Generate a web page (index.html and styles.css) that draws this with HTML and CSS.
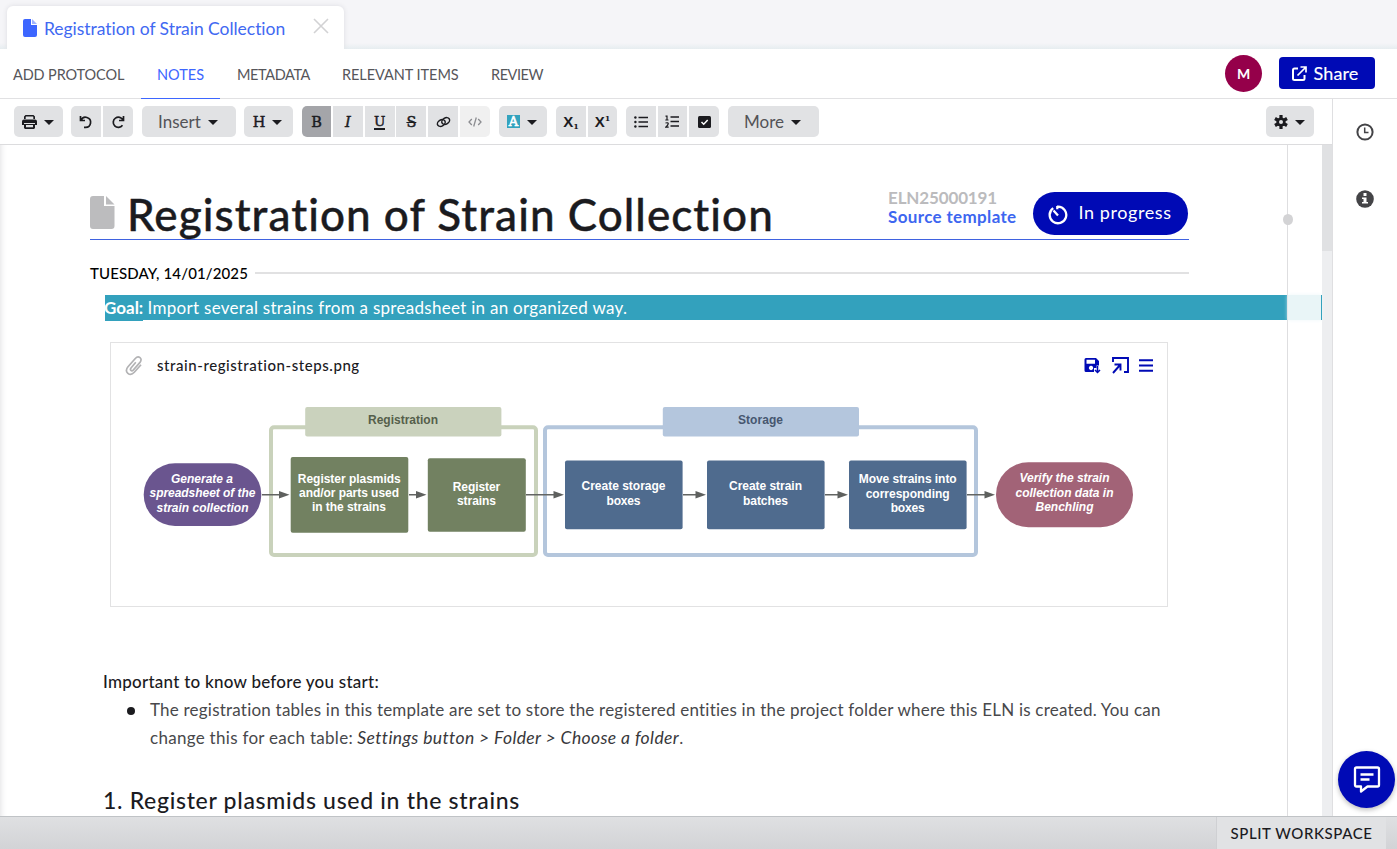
FILE: index.html
```html
<!DOCTYPE html>
<html lang="en">
<head>
<meta charset="utf-8">
<title>Registration of Strain Collection</title>
<link rel="stylesheet" href="styles.css">
</head>
<body>
<div class="app">
  <header class="tabstrip">
    <div class="tab">
      <svg class="tab-icon" width="14" height="18" viewBox="0 0 14 18"><path fill="#3d66ff" d="M2 0h6v6h6v10a2 2 0 0 1-2 2H2a2 2 0 0 1-2-2V2a2 2 0 0 1 2-2z"/><path fill="#9eb3ff" d="M9 0l5 5H9z"/></svg>
      <span class="tab-title">Registration of Strain Collection</span>
      <svg class="tab-close" width="16" height="16" viewBox="0 0 16 16"><path d="M1 1l14 14M15 1L1 15" stroke="#d2d2d4" stroke-width="1.6"/></svg>
    </div>
  </header>
  <nav class="nav">
    <a class="nav-protocol">ADD PROTOCOL</a>
    <a class="nav-notes active">NOTES</a>
    <a class="nav-meta">METADATA</a>
    <a class="nav-items">RELEVANT ITEMS</a>
    <a class="nav-review">REVIEW</a>
    <div class="avatar">M</div>
    <button class="share">
      <svg width="15" height="15" viewBox="0 0 15 15" fill="none" stroke="#fff" stroke-width="2"><path d="M6 2.500H2.500Q1 2.500 1 4v8.500Q1 14 2.500 14h8.500q1.500 0 1.500-1.500V9"/><path d="M8.500 1H14v5.500M14 1L5.500 9.500" stroke-width="1.700"/></svg>
      <span>Share</span>
    </button>
  </nav>
  <main class="body">
    <section class="editor">
      <div class="toolbar">
        <div class="group g-print"><button class="b49"><svg width="15" height="14" viewBox="0 0 15 14"><path fill="#1b1b1f" fill-rule="evenodd" d="M3.500 0h8L13 1.500V4H11.300V2L11 1.600H4L3.700 2v2H2V1.500zM2 4.500h11q2 0 2 2V10h-2V8H2v2H0V6.500q0-2 2-2zM2 9h11v4l-1 1H3l-1-1zm2 1v2.300h7V10z"/></svg><i class="caret"></i></button></div>
        <div class="group g-undo"><button class="b30"><svg width="14" height="14" viewBox="0 0 14 14" fill="none" stroke="#1b1b1f" stroke-width="1.700"><path d="M1.500 1v4.500H6M2 5.300A5 5 0 1 1 6.500 12.300H5"/></svg></button><button class="b30"><svg width="14" height="14" viewBox="0 0 14 14" fill="none" stroke="#1b1b1f" stroke-width="1.700"><path d="M12.500 1v4.500H8M12 5.200A5.100 5.100 0 1 0 11.500 10.300"/></svg></button></div>
        <div class="group g-insert"><button class="b94"><span class="word insert">Insert</span><i class="caret"></i></button></div>
        <div class="group g-head"><button class="b49"><span class="slab">H</span><i class="caret"></i></button></div>
        <div class="group g-format">
          <button class="b29 on"><span class="slab">B</span></button><button class="b30"><span class="slab it">I</span></button><button class="b30"><span class="slab un">U</span></button><button class="b30"><span class="slab st">S</span></button><button class="b30"><svg width="15" height="12" viewBox="0 0 15 12" fill="none" stroke="#1b1b1f" stroke-width="1.500"><ellipse cx="5.300" cy="7" rx="4.200" ry="3" transform="rotate(-32 5.300 7)"/><ellipse cx="9.700" cy="5" rx="4.200" ry="3" transform="rotate(-32 9.700 5)"/></svg></button><button class="b30 off"><svg width="14" height="10" viewBox="0 0 14 10" fill="none" stroke="#8c8d91" stroke-width="1.300"><path d="M3.800 2L1 5l2.800 3M10.200 2L13 5l-2.800 3M8.300 .5l-2.600 9"/></svg></button>
        </div>
        <div class="group g-color"><button class="b48"><span class="swatch">A</span><i class="caret"></i></button></div>
        <div class="group g-sub"><button class="b30"><span class="xs">X<small class="low">1</small></span></button><button class="b29"><span class="xs">X<small class="high">1</small></span></button></div>
        <div class="group g-list">
          <button class="b30"><svg width="14" height="12" viewBox="0 0 14 12"><path d="M4.500 1.500H14M4.500 6H14M4.500 10.500H14" stroke="#1b1b1f" stroke-width="1.500"/><g fill="#1b1b1f"><circle cx="1.400" cy="1.500" r="1.200"/><circle cx="1.400" cy="6" r="1.200"/><circle cx="1.400" cy="10.500" r="1.200"/></g></svg></button><button class="b29"><svg width="14" height="13" viewBox="0 0 14 13" fill="none" stroke="#1b1b1f"><path d="M5.500 2H14M5.500 6.500H14M5.500 11H14" stroke-width="1.500"/><path d="M.5 1.200h1.500V5M.3 5h3.200M.5 8q3-.8 2.700 .9Q3 10.200 .7 12.200H3.700" stroke-width="1.200"/></svg></button><button class="b30"><svg class="check" width="13" height="12" viewBox="0 0 13 12"><rect width="13" height="12" rx="1.500" fill="#1b1b1f"/><path d="M3.500 6l2.200 2.200L9.700 4" fill="none" stroke="#fff" stroke-width="1.500"/></svg></button>
        </div>
        <div class="group g-more"><button class="b91"><span class="word more">More</span><i class="caret"></i></button></div>
        <div class="group g-gear"><button class="b48"><svg width="14" height="14" viewBox="0 0 14 14"><g stroke="#1b1b1f" stroke-width="3.200"><path d="M7 0v14M1 3.500l12 7M13 3.500l-12 7"/></g><circle cx="7" cy="7" r="4.600" fill="#1b1b1f"/><circle cx="7" cy="7" r="2" fill="#e1e2e4"/></svg><i class="caret"></i></button></div>
      </div>
      <div class="scroller">
        <article class="page">
          <div class="title-row">
            <svg class="doc-icon" width="25" height="33" viewBox="0 0 25 33"><path fill="#bcbcbe" d="M3 0h11v10h10.500v20a3 3 0 0 1-3 3H3a3 3 0 0 1-3-3V3a3 3 0 0 1 3-3z"/><path fill="#bcbcbe" d="M16 0l8.500 8.500H16z"/></svg>
            <h1>Registration of Strain Collection</h1>
            <div class="meta">
              <span class="eln">ELN25000191</span>
              <a class="source">Source template</a>
            </div>
            <button class="status"><svg width="20" height="20" viewBox="0 0 20 20" fill="none" stroke="#fff" stroke-width="2.300"><path d="M5.200 3.100A8.300 8.300 0 1 0 10 1.600h-1M5.500 5.500l4.500 5M9.300 1v3.200"/></svg><span>In progress</span></button>
          </div>
          <div class="date-row"><span class="date">TUESDAY, 14/01/2025</span><i></i></div>
          <p class="goal"><b>Goal:</b> <span class="goal-text">Import several strains from a spreadsheet in an organized way.</span></p>
          <figure class="card">
            <figcaption>
              <svg class="clip" width="18" height="20" viewBox="0 0 18 20" fill="none" stroke="#b2b2b4" stroke-width="1.700"><path d="M10.800 6.200L6 12c-1.500 2 .6 3.800 2.200 2.100l6.800-7.700c3.200-4.100-1.600-7.400-4.700-3.900L3 10.800c-4.200 5.100 1.800 10.400 6.300 5.500L16 8.800"/></svg>
              <span class="file">strain-registration-steps.png</span>
              <span class="actions">
                <svg width="17" height="17" viewBox="0 0 17 17"><path fill="#000ab5" fill-rule="evenodd" d="M2 1h10l3 3v4.500h-2.500V11H10v4H2q-1.500 0-1.500-1.500v-11Q.5 1 2 1zm.500 1.800v4h8.500v-4zM7 8.800a2.200 2.200 0 1 0 .1 0z"/><path d="M13.500 9v6.500M11 13l2.500 2.500L16 13" fill="none" stroke="#000ab5" stroke-width="1.500"/></svg>
                <svg width="17" height="17" viewBox="0 0 17 17" fill="none" stroke="#000ab5" stroke-width="1.900"><path d="M1 5V1h15v14h-4"/><path d="M2.500 7.500h6v6M8.500 7.500L1 16"/></svg>
                <svg width="14" height="13" viewBox="0 0 14 13"><path d="M0 1.200h14M0 6.500h14M0 11.800h14" stroke="#000ab5" stroke-width="2"/></svg>
              </span>
            </figcaption>
            <svg class="flow" width="1010" height="165" viewBox="134 400 1010 165">
              <g fill="#fff" stroke-width="4">
                <rect x="271" y="427.300" width="265" height="127.700" rx="3" stroke="#c9d2bb"/>
                <rect x="545" y="427.300" width="431" height="127.700" rx="3" stroke="#b4c6dc"/>
              </g>
              <rect x="305.200" y="407" width="196.200" height="29.500" rx="2" fill="#cad2bd"/>
              <rect x="662.800" y="407" width="196.200" height="29.500" rx="2" fill="#b4c6dd"/>
              <rect x="143.700" y="463.300" width="117.600" height="62.700" rx="31.300" fill="#6a558f"/>
              <rect x="290.700" y="457" width="117.600" height="75.700" rx="2" fill="#728161"/>
              <rect x="427.800" y="458.200" width="98" height="73.600" rx="2" fill="#728161"/>
              <g fill="#4f6b8e">
                <rect x="565" y="460.500" width="117.600" height="68.700" rx="2"/>
                <rect x="707" y="460.500" width="117.600" height="68.700" rx="2"/>
                <rect x="849" y="460.500" width="117.600" height="68.700" rx="2"/>
              </g>
              <rect x="996" y="462.300" width="137" height="64.900" rx="32.400" fill="#a26377"/>
              <path stroke="#626462" stroke-width="1.500" d="M262 494.800h20M409 494.800h10M526 494.800h30M683 494.800h15M825 494.800h15M967 494.800h20"/>
              <path fill="#5e605e" d="M279 491l10.500 3.800L279 498.600zM416 491l10.500 3.800L416 498.600zM553.500 491l10.500 3.800-10.500 3.800zM695.500 491l10.500 3.800-10.500 3.800zM837.500 491l10.500 3.800-10.500 3.800zM984.500 491l10.500 3.800-10.500 3.800z"/>
              <g class="lbl">
                <text x="403" y="423.600" fill="#555f4b" textLength="70">Registration</text>
                <text x="760.500" y="423.600" fill="#46566f" textLength="45">Storage</text>
                <g class="em"><text x="202" y="483" textLength="62">Generate a</text><text x="202.500" y="497.400" textLength="106">spreadsheet of the</text><text x="202.500" y="511.800" textLength="92">strain collection</text></g>
                <text x="349.300" y="482.600" textLength="103">Register plasmids</text><text x="349" y="497" textLength="100">and/or parts used</text><text x="349" y="511.400" textLength="74">in the strains</text>
                <text x="476.500" y="491.200" textLength="47.500">Register</text><text x="476.500" y="505.400" textLength="39">strains</text>
                <text x="623.500" y="490.400" textLength="84">Create storage</text><text x="623.500" y="504.700" textLength="34">boxes</text>
                <text x="765.500" y="490.400" textLength="73">Create strain</text><text x="765.500" y="504.700" textLength="45">batches</text>
                <text x="907.700" y="483.300" textLength="98">Move strains into</text><text x="907.700" y="497.700" textLength="84">corresponding</text><text x="907.700" y="512" textLength="34">boxes</text>
                <g class="em"><text x="1064.500" y="482.200" textLength="90">Verify the strain</text><text x="1064.500" y="496.700" textLength="98">collection data in</text><text x="1064.500" y="511" textLength="58">Benchling</text></g>
              </g>
            </svg>
          </figure>
          <p class="important">Important to know before you start:</p>
          <ul class="notes"><li><span class="n1">The registration tables in this template are set to store the registered entities in the project folder where this ELN is created. You can</span><br><span class="n2">change this for each table:</span> <em>Settings button &gt; Folder &gt; Choose a folder</em>.</li></ul>
          <h2>1. Register plasmids used in the strains</h2>
        </article>
        <div class="gutter"><i class="knob"></i><i class="mark"></i></div>
        <div class="track"><i></i></div>
      </div>
    </section>
    <aside class="rail">
      <svg width="18" height="18" viewBox="0 0 18 18" fill="none" stroke="#444447" stroke-width="2"><circle cx="9" cy="9" r="7.600"/><path d="M8.700 4.500V9.500H12.500" stroke-width="1.500"/></svg>
      <svg width="18" height="18" viewBox="0 0 18 18"><circle cx="9" cy="9" r="8.800" fill="#444447"/><path fill="#fff" d="M7.500 3h3v3h-3zM6 7.500h4.500V12H12v1.500H6V12h1.500V9H6z"/></svg>
    </aside>
  </main>
  <footer class="footer"><button>SPLIT WORKSPACE</button></footer>
  <button class="chat"><svg width="28" height="27" viewBox="0 0 28 27" fill="none" stroke="#fff" stroke-width="2.300" stroke-linejoin="round"><path d="M3.500 1.500h21q1.500 0 1.500 1.500v16q0 1.500-1.500 1.500H14.500L8 25.500v-5H3.500Q2 20.500 2 19V3q0-1.500 1.500-1.500z"/><path d="M7.500 8.500h13M7.500 13.500h9"/></svg></button>
</div>
</body>
</html>
```
FILE: styles.css
```css
* { box-sizing: border-box; }
body { margin: 0; font-family: Lato, "Liberation Sans", sans-serif; color: #1b1b1f; background: #fff; font-variant-ligatures: none; }
button { border: 0; padding: 0; margin: 0; font: inherit; color: inherit; display: flex; align-items: center; justify-content: center; }
.app { width: 1397px; height: 849px; display: flex; flex-direction: column; overflow: hidden; position: relative; }

.tabstrip { height: 49px; flex: none; padding: 6px 0 0 7px; background: linear-gradient(#f5f5f8 0, #f5f5f8 43px, #e6edf0 49px); }
.tab { width: 337px; height: 43px; background: #fff; border-radius: 6px 6px 0 0; box-shadow: 0 0 5px #dcdce0; display: flex; align-items: center; padding: 0 15px 0 16px; clip-path: inset(-6px -6px 0 -6px); }
.tab-title { font-size: 17.500px; letter-spacing: -.04px; color: #4169f2; margin: 1px 0 0 7px; white-space: nowrap; }
.tab-close { margin-left: auto; margin-bottom: 3px; }

.nav { height: 50px; flex: none; display: flex; align-items: center; border-bottom: 1px solid #e1e1e3; padding-right: 22px; }
.nav a { height: 50px; line-height: 51px; font-size: 14.500px; color: #56565a; white-space: nowrap; }
.nav .nav-protocol { width: 141px; padding-left: 13px; letter-spacing: -.12px; }
.nav .nav-notes { width: 79px; padding-left: 16px; color: #3d66ff; border-bottom: 1px solid #3d66ff; }
.nav .nav-meta { width: 122px; padding-left: 17px; letter-spacing: -.39px; }
.nav .nav-items { width: 149px; letter-spacing: -.05px; }
.nav .nav-review { letter-spacing: -.45px; }
.avatar { margin-left: auto; width: 37px; height: 37px; border-radius: 50%; background: #95004a; color: #fff; font-size: 14px; font-weight: 700; display: flex; align-items: center; justify-content: center; }
.share { width: 96px; height: 32px; margin: -1px 0 0 17px; border-radius: 4px; background: #000ab5; color: #fff; font-size: 18px; gap: 7px; padding-right: 4px; letter-spacing: .14px; -webkit-text-stroke: .15px; }

.body { flex: 1; min-height: 0; display: flex; }
.editor { width: 1332px; display: flex; flex-direction: column; }
.toolbar { height: 46px; flex: none; border-bottom: 1px solid #dcdcde; display: flex; padding: 7px 18px 0 14px; gap: 9px; }
.g-print, .g-insert { margin-right: -1px; }
.group { display: flex; gap: 2px; border-radius: 5px; overflow: hidden; height: 31px; }
.group button { height: 31px; background: #e1e2e4; gap: 7px; padding-right: 2px; }
.group .b30, .group .b29 { padding-right: 0; }
.group .on { background: #a4a5a9; }
.group .off { background: #f0f0f0; }
.g-format { gap: 1.800px; }
.g-gear { margin-left: auto; }
.b29 { width: 29px; } .b30 { width: 30px; } .b48 { width: 48px; } .b49 { width: 49px; } .b91 { width: 91px; } .b94 { width: 94px; }
.caret { border: 5px solid transparent; border-top: 5px solid #1b1b1f; border-bottom: 0; margin-top: 1px; }
.check { margin-left: 1px; }
.word { font-size: 17px; color: #535357; }
.insert { letter-spacing: .05px; }
.more { letter-spacing: -.05px; }
.slab { font: 400 14.500px/16px "DejaVu Serif", serif; -webkit-text-stroke: .45px; }
.it { font-style: italic; }
.un { font-size: 13.500px; line-height: 14px; border-bottom: 2px solid #1b1b1f; }
.st { text-decoration: line-through; }
.swatch { width: 13px; height: 13px; background: #33a3be; color: #fff; font: 400 13px/14px "DejaVu Serif", serif; text-align: center; -webkit-text-stroke: .6px; }
.xs { font: 700 15px/18px "Liberation Sans", sans-serif; display: flex; align-items: center; }
.xs small { font: 700 8px/10px "DejaVu Serif", serif; }
.low { padding-top: 8px; }
.high { padding-bottom: 8px; }

.scroller { flex: 1; min-height: 0; display: flex; overflow: hidden; }
.page { width: 1287px; flex: none; box-shadow: inset 8px 0 7px -8px #d9d9dc; }
.title-row { margin: 40px 98px 0 90px; width: 1099px; height: 55px; border-bottom: 1px solid #3f62e0; display: flex; align-items: flex-start; }
.doc-icon { margin-top: 11px; flex: none; }
h1 { width: 759px; margin: 0 0 0 12px; font-size: 44px; letter-spacing: 1.050px; line-height: 59px; font-weight: 500; white-space: nowrap; -webkit-text-stroke: .4px; }
.meta { width: 147px; padding: 3px 0 0 2px; display: flex; flex-direction: column; align-items: flex-start; font-size: 17px; line-height: 19px; font-weight: 700; white-space: nowrap; }
.eln { color: #bbbbbd; letter-spacing: -.145px; }
.source { color: #3d66f0; letter-spacing: .35px; }
.status { width: 155px; height: 43px; margin-top: 7px; border-radius: 22px; background: #000ab5; color: #fff; font-size: 18px; letter-spacing: .6px; gap: 10px; padding-right: 1px; }
.status svg { margin-top: 2px; }
.status span { margin-top: -3px; }
.date-row { margin: 23px 98px 0 90px; width: 1099px; height: 20px; display: flex; align-items: center; font-size: 15px; letter-spacing: .118px; font-weight: 500; color: #000; white-space: nowrap; }
.date-row i { flex: 1; height: 2px; background: #e1e1e2; margin-left: 7px; }
.goal { margin: 12px 0 0 105px; height: 25px; background: #33a1bd; color: #fff; font-size: 17px; line-height: 26px; white-space: nowrap; }
.goal b { display: inline-block; height: 26px; background: #33a1bd; vertical-align: top; text-indent: -1px; }
.goal-text { letter-spacing: .285px; }
.card { margin: 22px 0 0 110px; width: 1058px; height: 265px; border: 1px solid #e2e2e3; }
figcaption { height: 57px; display: flex; align-items: center; padding: 0 14px 11px 14px; }
.file { margin: -2px 0 0 14px; font-size: 15px; letter-spacing: .564px; font-weight: 500; }
.actions { margin: -2px 0 0 auto; display: flex; align-items: center; gap: 10.500px; }
.flow { display: block; margin-left: 23px; }
.lbl { font: 700 12px "Liberation Sans", sans-serif; fill: #fff; text-anchor: middle; }
.em { font-style: italic; }
.important { margin: 61px 0 0 103px; font-size: 17px; letter-spacing: .248px; line-height: 28px; font-weight: 500; }
.notes { list-style: none; margin: 0; padding: 0 0 0 150px; font-size: 17px; line-height: 28px; color: #48484b; white-space: nowrap; }
.notes li::before { content: ""; float: left; width: 8px; height: 8px; border-radius: 50%; background: #1b1b1f; margin: 11px 0 0 -23px; }
.n1 { letter-spacing: .215px; }
.n2 { letter-spacing: .291px; }
.notes em { letter-spacing: .38px; font-size: 17.500px; line-height: 20px; color: #38383b; }
h2 { margin: 32px 0 0 103px; font-size: 23px; letter-spacing: .693px; line-height: 32px; font-weight: 500; }
.gutter { width: 35px; border-left: 1px solid #dedee0; position: relative; }
.knob { position: absolute; left: -5px; top: 69px; width: 10px; height: 11px; border-radius: 50%; background: #d3d3d5; }
.mark { position: absolute; left: 0; right: 0; top: 150px; height: 25px; background: #e9f5f7; border-right: 1px solid #33a1bd; box-shadow: 0 0 4px #edf7f9; }
.track { width: 10px; background: #edeef0; }
.track i { display: block; height: 106px; background: #e0e1e3; }
.rail { width: 65px; border-left: 1px solid #dfdfe1; display: flex; flex-direction: column; align-items: center; padding-top: 24px; gap: 49px; }

.footer { height: 33px; flex: none; border-top: 1px solid #c0c3c6; background: linear-gradient(#dfe0e2, #d2d3d6); display: flex; justify-content: flex-end; padding-right: 11px; }
.footer button { width: 170px; height: 32px; background: #e1e2e4; border-left: 1px solid #cfd0d3; padding-bottom: 1px; font-size: 15px; letter-spacing: .58px; font-weight: 500; white-space: nowrap; }
.chat { position: absolute; left: 1338px; top: 751px; width: 57px; height: 57px; border-radius: 50%; background: #000ab5; box-shadow: 0 2px 5px #0004; }
```
